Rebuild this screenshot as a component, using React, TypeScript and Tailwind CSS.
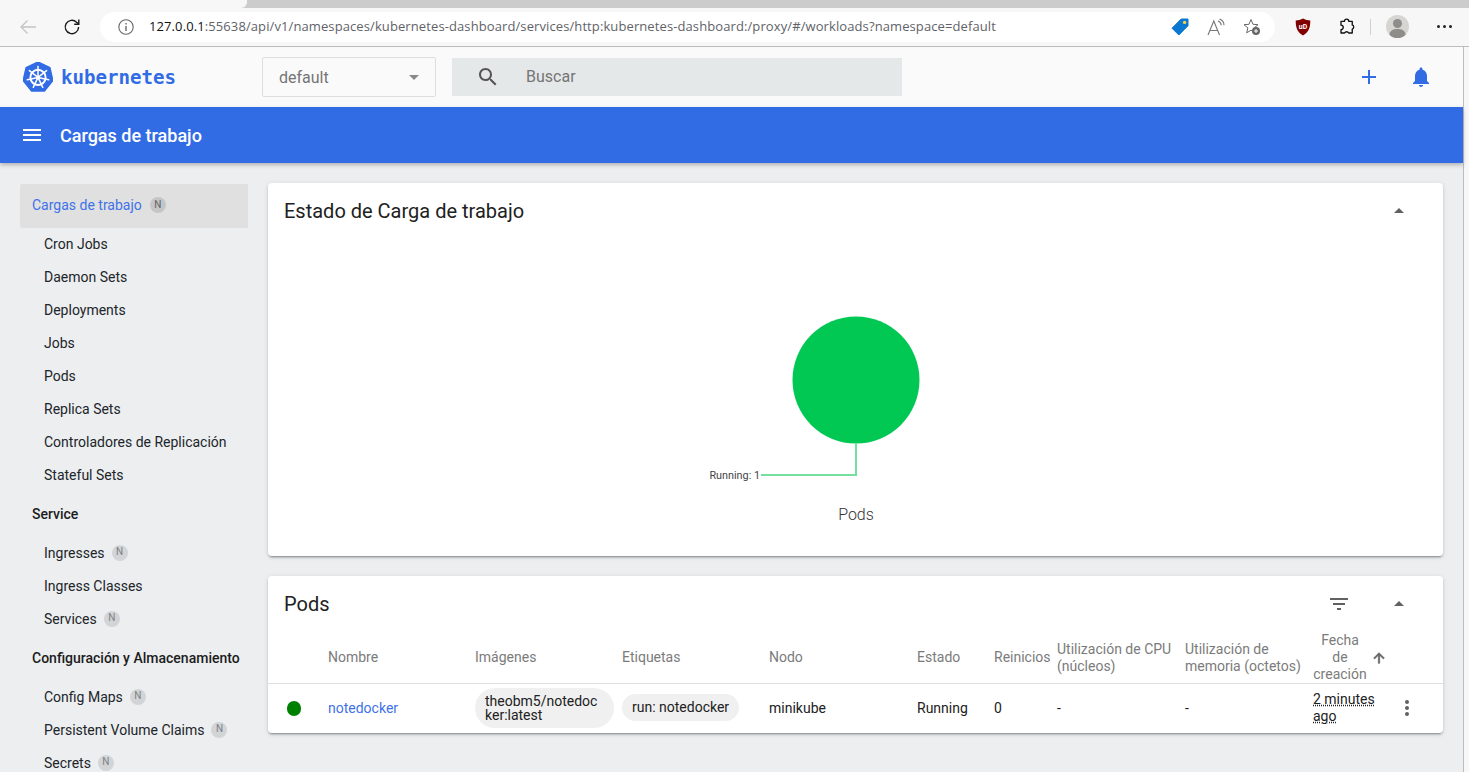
import React from "react";

const P = {
  menu: "M3 18h18v-2H3v2zm0-5h18v-2H3v2zm0-7v2h18V6H3z",
  search: "M15.5 14h-.79l-.28-.27C15.41 12.59 16 11.11 16 9.5 16 5.91 13.09 3 9.5 3S3 5.91 3 9.5 5.91 16 9.5 16c1.61 0 3.09-.59 4.23-1.57l.27.28v.79l5 4.99L20.49 19l-4.99-5zm-6 0C7.01 14 5 11.99 5 9.5S7.01 5 9.5 5 14 7.01 14 9.5 11.99 14 9.5 14z",
  add: "M19 13h-6v6h-2v-6H5v-2h6V5h2v6h6v2z",
  bell: "M12 22c1.1 0 2-.9 2-2h-4c0 1.1.89 2 2 2zm6-6v-5c0-3.07-1.64-5.64-4.5-6.32V4c0-.83-.67-1.5-1.5-1.5s-1.5.67-1.5 1.5v.68C7.63 5.36 6 7.92 6 11v5l-2 2v1h16v-1l-2-2z",
  filter: "M10 18h4v-2h-4v2zM3 6v2h18V6H3zm3 7h12v-2H6v2z",
  up: "M7 14l5-5 5 5z",
  down: "M7 10l5 5 5-5z",
  arrowUp: "M4 12l1.41 1.41L11 7.83V20h2V7.83l5.58 5.59L20 12l-8-8-8 8z",
  more: "M12 8c1.1 0 2-.9 2-2s-.9-2-2-2-2 .9-2 2 .9 2 2 2zm0 2c-1.1 0-2 .9-2 2s.9 2 2 2 2-.9 2-2-.9-2-2-2zm0 6c-1.1 0-2 .9-2 2s.9 2 2 2 2-.9 2-2-.9-2-2-2z",
};

function M({ d, className }: { d: string; className: string }) {
  return (
    <svg viewBox="0 0 24 24" className={className} fill="currentColor">
      <path d={d} />
    </svg>
  );
}

function Logo() {
  const spokes = [0, 1, 2, 3, 4, 5, 6].map((i) => (i * 2 * Math.PI) / 7 - Math.PI / 2);
  const hept = spokes
    .map((a) => `${15 + 15.2 * Math.cos(a)},${15.2 + 15.2 * Math.sin(a)}`)
    .join(" ");
  return (
    <svg width="30" height="30" viewBox="0 0 30 30" className="shrink-0">
      <polygon points={hept} fill="#326ce5" stroke="#326ce5" strokeWidth="1.5" strokeLinejoin="round" />
      <circle cx="15" cy="15.4" r="7.6" fill="none" stroke="#fff" strokeWidth="1.9" />
      <circle cx="15" cy="15.4" r="1.9" fill="#fff" />
      {spokes.map((a, i) => (
        <line
          key={i}
          x1={15}
          y1={15.4}
          x2={15 + 11 * Math.cos(a)}
          y2={15.4 + 11 * Math.sin(a)}
          stroke="#fff"
          strokeWidth="1.5"
          strokeLinecap="round"
        />
      ))}
    </svg>
  );
}

function Badge({ active }: { active?: boolean }) {
  return (
    <span
      className={
        active
          ? "ml-[8px] flex h-4 w-4 items-center justify-center rounded-full bg-[#c4c5c6] text-[10px] text-[#5f6368]"
          : "ml-[7px] flex h-4 w-4 items-center justify-center rounded-full bg-[#d2d4d6] text-[10px] text-[#7c8288]"
      }
    >
      N
    </span>
  );
}

function Item({ label, n }: { label: string; n?: boolean }) {
  return (
    <div className="flex h-[33px] items-center pl-6 text-sm text-[#212529]">
      {label}
      {n && <Badge />}
    </div>
  );
}

function Section({ label }: { label: string }) {
  return <div className="flex h-[45px] items-center pl-3 pt-px text-sm font-medium text-[#1c1c1c]">{label}</div>;
}

function Toolbar() {
  return (
    <div className="flex h-[39px] items-center border-b border-[#bdbdbd] bg-[#f7f7f7] pb-[1px]">
      <svg width="18" height="16" viewBox="0 0 18 16" className="ml-[19px] shrink-0" fill="none" stroke="#c4c4c4" strokeWidth="1.3">
        <path d="M17 8H2M8.5 1.5 2 8l6.5 6.5" />
      </svg>
      <svg width="18" height="18" viewBox="0 0 18 18" className="ml-[26px] shrink-0" fill="none" stroke="#1a1a1a" strokeWidth="1.4">
        <path d="M15.6 9a6.7 6.7 0 1 1-2-4.8L15.6 6" />
        <path d="M15.8 1.6V6.2H11.2" />
      </svg>
      <div className="ml-[19px] flex h-[30px] w-[1175px] shrink-0 items-center rounded-full bg-white">
        <svg width="16" height="16" viewBox="0 0 16 16" className="ml-[18px] shrink-0" fill="none" stroke="#666" strokeWidth="1.1">
          <circle cx="8" cy="8" r="7.2" />
          <path d="M8 7v5M8 4v1.4" strokeWidth="1.4" />
        </svg>
        <div className="ml-[15px] whitespace-nowrap font-['Open_Sans'] text-[13px] tracking-[0.1px] text-[#5f6368]">
          <span className="text-[#111]">127.0.0.1</span>:55638/api/v1/namespaces/kubernetes-dashboard/services/http:kubernetes-dashboard:/proxy/#/workloads?namespace=default
        </div>
        <div className="ml-auto flex items-center">
          <svg width="18" height="18" viewBox="0 0 18 18" className="shrink-0">
            <path d="M10.2 1H17v6.8L7.8 17 1 10.2z" fill="#0a78d0" stroke="#0a78d0" strokeLinejoin="round" />
            <circle cx="13.6" cy="4.4" r="1.7" fill="#f6d04d" />
          </svg>
          <svg width="18" height="18" viewBox="0 0 18 18" className="ml-[18px] shrink-0" fill="none" stroke="#777" strokeWidth="1.1">
            <path d="M1 17 6.8 3 12.5 17M3 12.500h7.500" />
            <path d="M11 3c2 .8 3.200 2.200 3.200 4.200M12.500 1c2.700 1 4.500 3.400 4.500 6.200" />
          </svg>
          <svg width="18" height="18" viewBox="0 0 18 18" className="ml-[18px] mr-[14px] shrink-0">
            <path d="M8 1.500 10 6.300l5 .4-3.800 3.200 1.200 4.900L8 12.200l-4.300 2.600 1.200-4.900L1 6.700l5-.4z" fill="none" stroke="#666" strokeWidth="1" strokeLinejoin="round" />
            <circle cx="13" cy="13" r="4" fill="#666" />
            <path d="M13 11v4M11 13h4" stroke="#fff" strokeWidth="1" />
          </svg>
        </div>
      </div>
      <svg width="16" height="18" viewBox="0 0 16 18" className="ml-5 shrink-0">
        <path d="M8 .5C6 1.800 3 2.500.7 2.500c0 6 1 11.500 7.300 15 6.300-3.500 7.300-9 7.300-15C13 2.500 10 1.800 8 .5z" fill="#800000" />
        <text x="8" y="10.500" textAnchor="middle" fontSize="7" fontWeight="700" fill="#fff" fontFamily="Roboto, sans-serif">uD</text>
      </svg>
      <svg width="18" height="18" viewBox="0 0 24 24" className="ml-[27px] shrink-0" fill="none" stroke="#111" strokeWidth="1.8" strokeLinejoin="round">
        <path d="M8.500 4.500a3 3 0 0 1 6 0H19v4.800a3 3 0 0 1 0 5.600V20h-4.800a3 3 0 0 0-5.400 0H4v-4.500a3 3 0 0 0 0-6V4.500z" />
      </svg>
      <div className="ml-[14px] h-[16px] w-px shrink-0 bg-[#d0d0d0]" />
      <div className="relative ml-[15px] h-[23px] w-[23px] shrink-0 overflow-hidden rounded-full bg-[#d6d5d2]">
        <div className="absolute left-[7px] top-[4px] h-[9px] w-[9px] rounded-full bg-[#8e8d8a]" />
        <div className="absolute left-[3px] top-[14px] h-[14px] w-[17px] rounded-full bg-[#8e8d8a]" />
      </div>
      <div className="ml-[28px] flex shrink-0 gap-[3px]">
        <span className="h-[3px] w-[3px] rounded-full bg-[#222]" />
        <span className="h-[3px] w-[3px] rounded-full bg-[#222]" />
        <span className="h-[3px] w-[3px] rounded-full bg-[#222]" />
      </div>
    </div>
  );
}

function Header() {
  return (
    <div className="flex h-[60px] items-center bg-[#fafafa]">
      <div className="ml-[23px] flex w-[239px] items-center">
        <Logo />
        <span className="ml-[8px] pt-[2px] font-['DejaVu_Sans_Mono'] text-[19.1px] font-bold leading-none text-[#326ce5]">kubernetes</span>
      </div>
      <div className="flex h-10 w-[174px] items-center justify-between rounded-[2px] border border-[#dedede] pl-4 pr-[9px] text-base text-[#757575]">
        <span className="pt-[2px]">default</span>
        <M d={P.down} className="h-6 w-6 text-[#8a8a8a]" />
      </div>
      <div className="ml-4 flex h-[38px] w-[450px] items-center bg-[#e5e8e9] pl-6 text-base text-[#757575]">
        <M d={P.search} className="h-6 w-6 text-[#555]" />
        <span className="ml-[26px]">Buscar</span>
      </div>
      <M d={P.add} className="ml-[455px] h-6 w-6 text-[#326ce5]" />
      <M d={P.bell} className="ml-7 h-6 w-6 text-[#326ce5]" />
    </div>
  );
}

function Sidebar() {
  return (
    <div className="ml-5 mt-[21px] w-[228px] shrink-0">
      <div className="flex h-11 items-center rounded-l-[2px] bg-[#e0e0e0] pb-[2px] pl-3 text-sm text-[#3f72e8]">
        Cargas de trabajo
        <Badge active />
      </div>
      <div className="-mt-px">
        <Item label="Cron Jobs" />
        <Item label="Daemon Sets" />
        <Item label="Deployments" />
        <Item label="Jobs" />
        <Item label="Pods" />
        <Item label="Replica Sets" />
        <Item label="Controladores de Replicación" />
        <Item label="Stateful Sets" />
      </div>
      <Section label="Service" />
      <Item label="Ingresses" n />
      <Item label="Ingress Classes" />
      <Item label="Services" n />
      <Section label="Configuración y Almacenamiento" />
      <Item label="Config Maps" n />
      <Item label="Persistent Volume Claims" n />
      <Item label="Secrets" n />
    </div>
  );
}

const card =
  "rounded-[4px] bg-white shadow-[0_3px_1px_-2px_rgba(0,0,0,0.2),0_2px_2px_0_rgba(0,0,0,0.14),0_1px_5px_0_rgba(0,0,0,0.12)]";

const cols = "grid grid-cols-[60px_147px_147px_147px_148px_77px_63px_128px_128px_130px]";

function Chart() {
  return (
    <div className={`${card} h-[373px]`}>
      <div className="flex h-14 items-center pl-4 pr-8 text-xl text-[#212121]">
        Estado de Carga de trabajo
        <M d={P.up} className="ml-auto h-6 w-6 text-[#616161]" />
      </div>
      <svg width="1175" height="317" viewBox="0 0 1175 317" className="block">
        <circle cx="588" cy="141" r="63.5" fill="#00c853" />
        <path d="M588 204V236H493" fill="none" stroke="#74e0a0" strokeWidth="2" />
        <text x="492" y="240" textAnchor="end" fontSize="10.8" fill="#444" fontFamily="Roboto, sans-serif">Running: 1</text>
        <text x="588" y="281" textAnchor="middle" fontSize="16" fontWeight="300" fill="#333" fontFamily="Roboto, sans-serif">Pods</text>
      </svg>
    </div>
  );
}

function Pods() {
  const h = "flex items-center text-sm leading-[17px] text-[#7b7b7b]";
  const c = "flex items-center pb-[2px] text-sm text-[#212121]";
  return (
    <div className={`${card} mt-5 h-[157px]`}>
      <div className="flex h-14 items-center pl-4 text-xl text-[#212121]">
        Pods
        <M d={P.filter} className="ml-auto h-6 w-6 text-[#616161]" />
        <M d={P.up} className="ml-[36px] mr-8 h-6 w-6 text-[#616161]" />
      </div>
      <div className={`${cols} h-[52px] border-b border-[#e0e0e0]`}>
        <div />
        <div className={h}>Nombre</div>
        <div className={h}>Imágenes</div>
        <div className={h}>Etiquetas</div>
        <div className={h}>Nodo</div>
        <div className={h}>Estado</div>
        <div className={h}>Reinicios</div>
        <div className={h}>Utilización de CPU (núcleos)</div>
        <div className={h}>Utilización de memoria (octetos)</div>
        <div className={h}>
          <span className="w-[54px] text-center">Fecha de creación</span>
          <M d={P.arrowUp} className="ml-[4px] h-4 w-4 stroke-[#616161] stroke-1 text-[#616161]" />
        </div>
      </div>
      <div className={`${cols} h-[49px]`}>
        <div className="flex items-center pl-[19px]">
          <span className="h-[15px] w-[14px] rounded-full bg-[#008000]" />
        </div>
        <div className="flex items-center pb-[2px] text-sm text-[#3f72e8]">notedocker</div>
        <div className={c}>
          <span className="w-[139px] break-all rounded-[20px] bg-[#f0f0f0] px-[10px] py-[6px] leading-[14px]">theobm5/notedocker:latest</span>
        </div>
        <div className={c}>
          <span className="rounded-[14px] bg-[#f0f0f0] px-[10px] py-[5px] leading-[17px]">run: notedocker</span>
        </div>
        <div className={c}>minikube</div>
        <div className={c}>Running</div>
        <div className={c}>0</div>
        <div className={c}>-</div>
        <div className={c}>-</div>
        <div className={c}>
          <span className="w-[66px] leading-[17px] underline decoration-dotted">2 minutes ago</span>
          <M d={P.more} className="ml-[16px] h-6 w-6 text-[#616161]" />
        </div>
      </div>
    </div>
  );
}

export default function App() {
  return (
    <div className="h-[772px] w-[1469px] overflow-hidden bg-[#f7f7f7] font-['Roboto',sans-serif]">
      <div className="flex h-2 bg-[#cccccc]">
        <div className="w-[247px] rounded-br-[6px] bg-[#f7f7f7]" />
      </div>
      <Toolbar />
      <div className="w-[1464px] border-r border-[#bdbdbd]">
        <Header />
        <div className="relative flex h-14 items-center bg-[#326ce5] pl-5 text-white shadow-[0_2px_4px_rgba(0,0,0,0.25)]">
          <M d={P.menu} className="h-6 w-6" />
          <span className="ml-4 pt-[2px] text-lg font-medium">Cargas de trabajo</span>
        </div>
        <div className="flex h-[609px] bg-[#eceef0]">
          <Sidebar />
          <div className="ml-5 mt-5 w-[1175px]">
            <Chart />
            <Pods />
          </div>
        </div>
      </div>
    </div>
  );
}
